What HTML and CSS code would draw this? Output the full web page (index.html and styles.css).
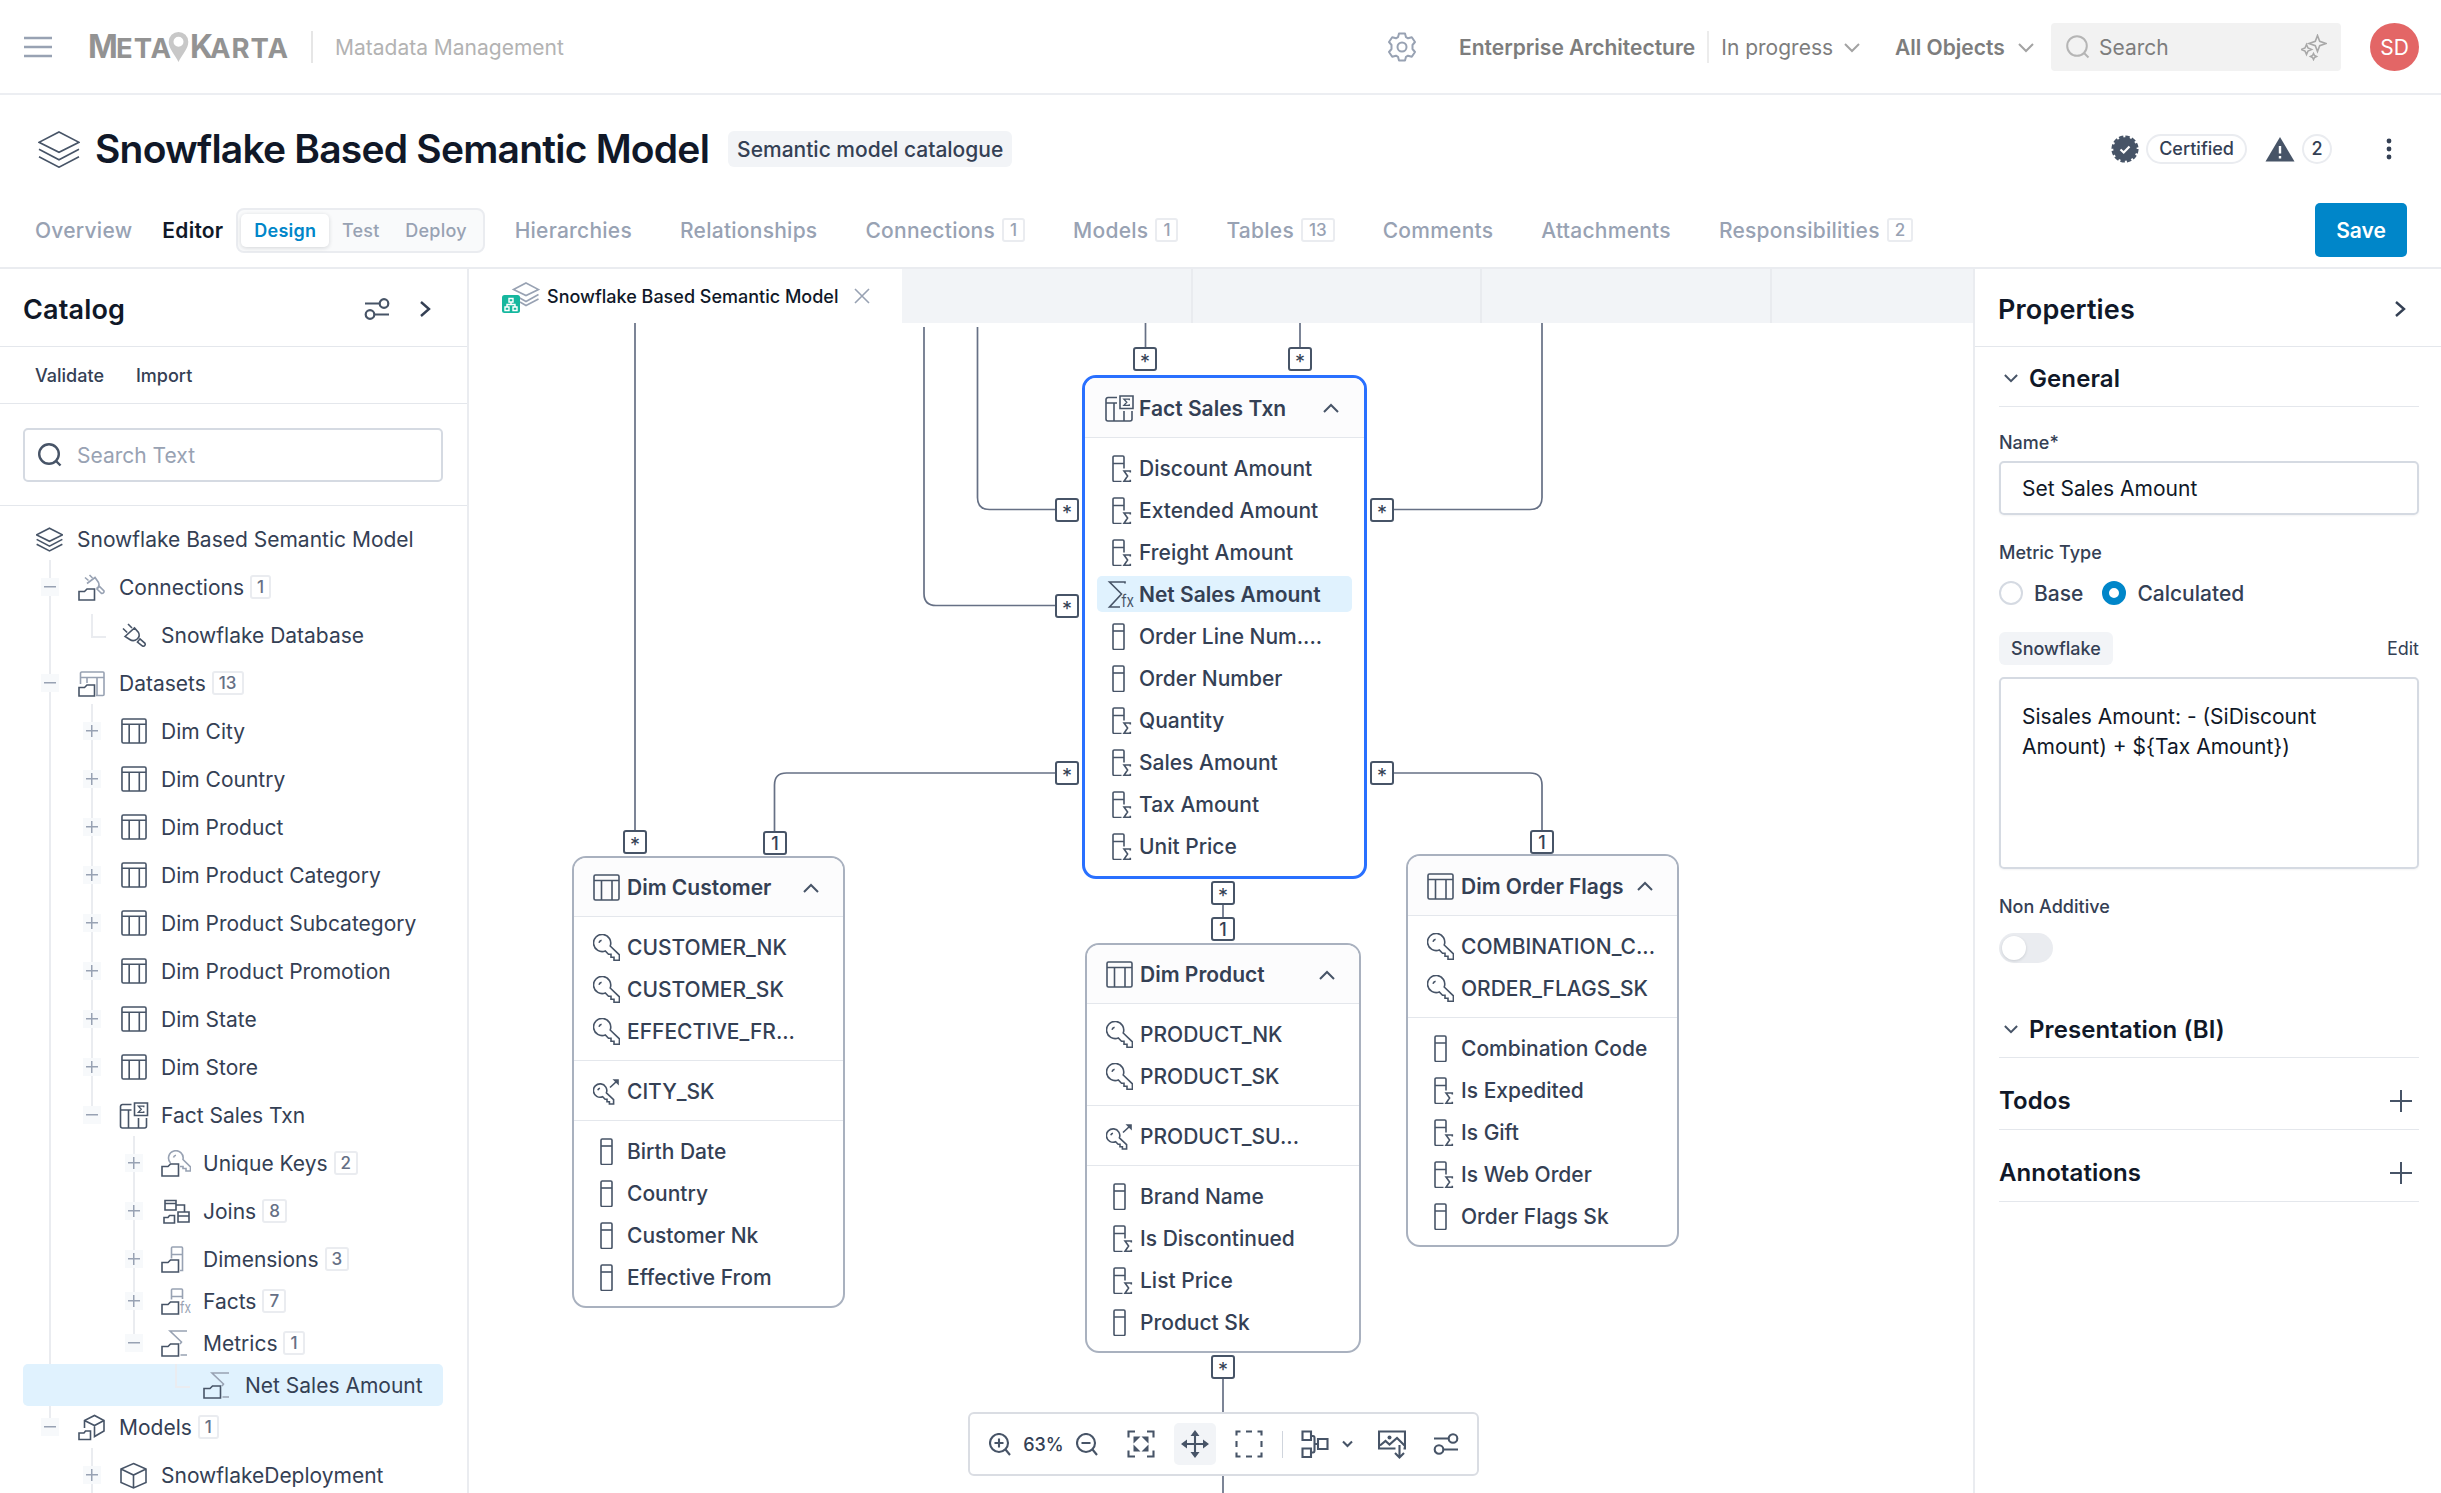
FILE: index.html
```html
<!DOCTYPE html>
<html lang="en">
<head>
    <meta charset="UTF-8">
    <meta name="viewport" content="width=device-width, initial-scale=1.0">
    <title>MetaKarta - Snowflake Based Semantic Model</title>
    <link rel="stylesheet" href="styles.css">
</head>
<body>
    <!-- Icon sprite -->
    <svg class="sprite">
        <symbol id="layers" viewBox="0 0 42 37"><path d="M21 1L41 11.3 21 21.3 1 11.3ZM1 18.3L21 28.8 41 18.3M1 25.8L21 36.2 41 25.8"/></symbol>
        <symbol id="table" viewBox="0 0 27 27"><rect x="1" y="1" width="25" height="25" rx="1.5"/><path d="M1 6.5H26M8.5 6.5V26M19 6.5V26"/></symbol>
        <symbol id="fact-table" viewBox="0 0 29 27"><path d="M12 2.5H3a2 2 0 0 0-2 2V24a2 2 0 0 0 2 2H25a2 2 0 0 0 2-2V16M1 8H12M9 8V26M19 16V26"/><rect x="15" y="1" width="13" height="12.5"/><path class="fine" d="M24.3 5.200V4.200H18.900L21.800 7.200 18.900 10.300H24.300V9.300"/></symbol>
        <symbol id="key" viewBox="0 0 27 27"><path d="M17.2 12L26.4 20.8V26.3H21V23.3H18V20.3H15.5L12.3 17A8.6 8.6 0 1 1 17.2 12ZM6 8.7A3.6 3.6 0 0 1 8.6 6.2"/></symbol>
        <symbol id="foreign-key" viewBox="0 0 27 27"><path d="M13.4 14.9L20.6 21.7V26H16.4V23.7H14V21.3H12.1L9.6 18.8A6.7 6.7 0 1 1 13.4 14.9ZM4.8 12.3A3 3 0 0 1 7 10.3M17 9.5L24 3"/><path class="solid" d="M19.5 1.2H25.8V7.5Z"/></symbol>
        <symbol id="column" viewBox="0 0 27 27"><rect x="8" y="1" width="11" height="25.5" rx="1.2"/><path d="M8 8H19"/></symbol>
        <symbol id="column-sum" viewBox="0 0 27 27"><path d="M19 13.5V2.2A1.2 1.2 0 0 0 17.8 1H9.2A1.2 1.2 0 0 0 8 2.2V25.3A1.2 1.2 0 0 0 9.2 26.5H16.5M8 8.5H19M25.3 17.5V16H19L22.6 21 19 26.2H25.3V24.7"/></symbol>
        <symbol id="sum-fx" viewBox="0 0 30 27"><path d="M20 2.5V1H4.5L16.5 13 4.5 26H15"/><text x="16.5" y="25.500" font-size="17" textLength="12.500" lengthAdjust="spacingAndGlyphs">fx</text></symbol>
        <symbol id="plug" viewBox="0 0 27 27"><path d="M5 14.5L14.5 6 18.5 10.5C19.8 13 19 15.5 17.2 17 15 18.8 12 19 9.8 17.5ZM7.2 10.5L3 6.5M12 6L8 2M17.5 20L20 16.8 25 21.3C25.8 22.8 24.5 24.8 22.5 24Z"/></symbol>
        <symbol id="plug-folder" viewBox="0 0 27 27"><g class="soft"><path d="M9 9.5L17 3.5 20.5 8.5C21.5 11 20.5 13.5 18.5 14.5M10.5 6.5L7 3.5M14.5 4L11.5 1M19 15L21.5 12.5 26 17C26.3 18.8 24.5 20 23 19Z"/></g><path d="M1 26V17.5H6.5L9 15H16.5V26Z"/></symbol>
        <symbol id="table-folder" viewBox="0 0 27 27"><g class="soft"><path d="M2.5 14V3A1.2 1.2 0 0 1 3.7 2H25A1 1 0 0 1 26 3V24.5A1 1 0 0 1 25 25.5H18M2.5 7.5H26M9 8V13M19 8V25.5"/></g><path d="M1 26V17.5H6.5L9 15H16.5V26Z"/></symbol>
        <symbol id="key-folder" viewBox="0 0 30 27"><g class="soft"><path d="M9.5 13A7.3 7.3 0 1 1 22 9.5L29.5 17V21H25V18.5H22V16.5H19M12.5 7.5A3 3 0 0 1 15 5.2"/></g><path d="M1 26V16.5H7L9.5 14H17.5V26Z"/></symbol>
        <symbol id="joins" viewBox="0 0 30 27"><path d="M4 2.500H15V12H4ZM4 5.500H15M15 7H23.500V13.500M17 14H28V24H17ZM17 18H28M3 25V19.500H7L8.500 17.500H13.500V25Z"/></symbol>
        <symbol id="column-folder" viewBox="0 0 30 27"><g class="soft"><path d="M10.5 12.5V2A1 1 0 0 1 11.5 1H20.5A1 1 0 0 1 21.5 2V24.5H19M10.5 8.5H21.5"/></g><path d="M1 26V16.5H7L9.5 14H17.5V26Z"/></symbol>
        <symbol id="fx-folder" viewBox="0 0 30 27"><g class="soft"><path d="M10.5 11.5V2A1 1 0 0 1 11.5 1H20.5A1 1 0 0 1 21.5 2V11M10.5 8.5H21.5"/><text x="19" y="25" font-size="16" textLength="11" lengthAdjust="spacingAndGlyphs">fx</text></g><path d="M1 26V16.5H7L9.5 14H17.5V26Z"/></symbol>
        <symbol id="sum-folder" viewBox="0 0 30 27"><g class="soft"><path d="M26 1H9L20.5 12 19 14M19.5 25H26"/></g><path d="M1 26V16.5H7L9.5 14H17.5V26Z"/></symbol>
        <symbol id="cube" viewBox="0 0 27 27"><path d="M13.5 1.5L26 7V20.5L13.5 26 1 20.5V7ZM1 7L13.5 13 26 7M13.5 13V26"/></symbol>
        <symbol id="cube-folder" viewBox="0 0 27 27"><path d="M6.5 14V6.5L16.5 1.5 26 6.5V17L16.5 22.5V11.5M6.5 6.5L16.5 11.5 26 6.5M1 25.5V19H6L7.5 17H12.5V25.5Z"/></symbol>
        <symbol id="chevron" viewBox="0 0 16 10"><path d="M1 1L8 8 15 1"/></symbol>
        <symbol id="search" viewBox="0 0 24 24"><circle cx="11" cy="11" r="9.8"/><path d="M18 18L22.5 22.5"/></symbol>
        <symbol id="sliders" viewBox="0 0 26 22"><circle cx="20" cy="5.5" r="4.3"/><circle cx="6" cy="16.5" r="4.3"/><path d="M1 5.5H15.7M10.3 16.5H25"/></symbol>
        <symbol id="plus" viewBox="0 0 22 22"><path d="M11 0V22M0 11H22"/></symbol>
    </svg>

    <header class="topbar">
        <svg class="menu" width="28" height="22"><path d="M0 2H28M0 11H28M0 20H28"/></svg>
        <svg class="logo" width="200" height="44" viewBox="0 0 200 44">
            <text x="-1" y="33" font-size="32" textLength="28">M</text>
            <text x="27" y="33" font-size="27.5" textLength="55">ETA</text>
            <text x="101" y="33" font-size="32" textLength="22">K</text>
            <text x="121" y="33" font-size="27.5" textLength="78">ARTA</text>
            <path d="M89.500 7A9.800 9.800 0 0 0 79.700 16.800C79.700 24 86 29.500 89.500 37 93 29.500 99.300 24 99.300 16.800A9.800 9.800 0 0 0 89.500 7ZM89.500 11.800A5 5 0 1 1 89.500 21.800 5 5 0 1 1 89.500 11.800Z"/>
        </svg>
        <span class="app-name">Matadata Management</span>
        <svg class="gear" width="30" height="30" viewBox="0 0 30 30"><path d="M12 1.500H18L19 5.200 21 6.300 24.800 5.200 28 10 25.500 13V17L28 20 24.800 24.800 21 23.700 19 24.800 18 28.500H12L11 24.800 9 23.700 5.200 24.800 2 20 4.500 17V13L2 10 5.200 5.200 9 6.300 11 5.200Z"/><circle cx="15" cy="15" r="4.500"/></svg>
        <span class="context">Enterprise Architecture</span>
        <span class="status">In progress <svg class="caret"><use href="#chevron"/></svg></span>
        <span class="scope">All Objects <svg class="caret"><use href="#chevron"/></svg></span>
        <div class="global-search">
            <svg class="lens"><use href="#search"/></svg>
            <span>Search</span>
            <svg class="sparkle" width="26" height="27" viewBox="0 0 26 27"><path d="M16.500 1.500L18.700 7.300 25 9.500 18.700 11.700 16.500 17.500 14.300 11.700 8 9.500 14.300 7.300ZM5.500 10.500L7 14 10.500 15.500 7 17 5.500 20.500 4 17 .5 15.500 4 14ZM12.500 19.500L13.500 21.500 15.500 22.500 13.500 23.500 12.500 25.500 11.500 23.500 9.500 22.500 11.500 21.500Z"/></svg>
        </div>
        <div class="avatar">SD</div>
    </header>

    <section class="heading">
        <div class="title-row">
            <svg class="title-icon"><use href="#layers"/></svg>
            <h1>Snowflake Based Semantic Model</h1>
            <span class="kind">Semantic model catalogue</span>
            <svg class="verified" width="28" height="28" viewBox="0 0 28 28"><circle cx="14" cy="14" r="11.700"/><circle class="scallop" cx="14" cy="14" r="12.300"/><path d="M9.500 14.500L12.700 17.500 18.500 11.500"/></svg>
            <span class="pill">Certified</span>
            <svg class="warning" width="30" height="26" viewBox="0 0 30 26"><path d="M15 1L29.500 25.500H.5Z"/><path class="mark" d="M15 10V17.500M15 20V22.500"/></svg>
            <span class="pill count">2</span>
            <svg class="more" width="6" height="22"><circle cx="3" cy="3" r="2.400"/><circle cx="3" cy="11" r="2.400"/><circle cx="3" cy="19" r="2.400"/></svg>
        </div>
        <nav class="tabs">
            <a>Overview</a>
            <a class="active">Editor</a>
            <div class="segmented">
                <span class="on">Design</span>
                <span>Test</span>
                <span>Deploy</span>
            </div>
            <a class="wide">Hierarchies</a>
            <a class="wide">Relationships</a>
            <a class="wide">Connections <b class="badge">1</b></a>
            <a class="wide">Models <b class="badge">1</b></a>
            <a class="wide">Tables <b class="badge">13</b></a>
            <a class="wide">Comments</a>
            <a class="wide">Attachments</a>
            <a class="wide">Responsibilities <b class="badge">2</b></a>
            <button class="save">Save</button>
        </nav>
    </section>

    <main class="workspace">
        <aside class="catalog">
            <div class="panel-head">
                <h2>Catalog</h2>
                <svg class="sliders"><use href="#sliders"/></svg>
                <svg class="collapse" width="12" height="18"><path d="M2 2L10 9 2 16"/></svg>
            </div>
            <div class="actions"><span>Validate</span><span>Import</span></div>
            <div class="filter">
                <div class="filter-box"><svg class="lens"><use href="#search"/></svg>Search Text</div>
            </div>
            <div class="tree">
                <div class="row"><svg class="ico"><use href="#layers"/></svg>Snowflake Based Semantic Model</div>
                <div class="row"><i class="t minus"></i><svg class="ico"><use href="#plug-folder"/></svg>Connections <b class="badge">1</b></div>
                <div class="row"><i class="g"></i><i class="elbow"></i><svg class="ico"><use href="#plug"/></svg>Snowflake Database</div>
                <div class="row"><i class="t minus"></i><svg class="ico"><use href="#table-folder"/></svg>Datasets <b class="badge">13</b></div>
                <div class="row"><i class="g"></i><i class="t"></i><svg class="ico small"><use href="#table"/></svg>Dim City</div>
                <div class="row"><i class="g"></i><i class="t"></i><svg class="ico small"><use href="#table"/></svg>Dim Country</div>
                <div class="row"><i class="g"></i><i class="t"></i><svg class="ico small"><use href="#table"/></svg>Dim Product</div>
                <div class="row"><i class="g"></i><i class="t"></i><svg class="ico small"><use href="#table"/></svg>Dim Product Category</div>
                <div class="row"><i class="g"></i><i class="t"></i><svg class="ico small"><use href="#table"/></svg>Dim Product Subcategory</div>
                <div class="row"><i class="g"></i><i class="t"></i><svg class="ico small"><use href="#table"/></svg>Dim Product Promotion</div>
                <div class="row"><i class="g"></i><i class="t"></i><svg class="ico small"><use href="#table"/></svg>Dim State</div>
                <div class="row"><i class="g"></i><i class="t"></i><svg class="ico small"><use href="#table"/></svg>Dim Store</div>
                <div class="row"><i class="g"></i><i class="t minus last"></i><svg class="ico big"><use href="#fact-table"/></svg>Fact Sales Txn</div>
                <div class="row"><i class="g"></i><i></i><i class="t"></i><svg class="ico big"><use href="#key-folder"/></svg>Unique Keys <b class="badge">2</b></div>
                <div class="row"><i class="g"></i><i></i><i class="t"></i><svg class="ico big"><use href="#joins"/></svg>Joins <b class="badge">8</b></div>
                <div class="row"><i class="g"></i><i></i><i class="t"></i><svg class="ico big"><use href="#column-folder"/></svg>Dimensions <b class="badge">3</b></div>
                <div class="row tight"><i class="g"></i><i></i><i class="t"></i><svg class="ico big"><use href="#fx-folder"/></svg>Facts <b class="badge">7</b></div>
                <div class="row tight"><i class="g"></i><i></i><i class="t minus last"></i><svg class="ico big"><use href="#sum-folder"/></svg>Metrics <b class="badge">1</b></div>
                <div class="row tight selected"><i></i><i></i><i></i><i class="elbow"></i><svg class="ico big"><use href="#sum-folder"/></svg>Net Sales Amount</div>
                <div class="row tight"><i class="t minus last"></i><svg class="ico"><use href="#cube-folder"/></svg>Models <b class="badge">1</b></div>
                <div class="row"><i></i><i class="t"></i><svg class="ico"><use href="#cube"/></svg>SnowflakeDeployment</div>
            </div>
        </aside>

        <section class="editor">
            <div class="doc-tabs">
                <div class="doc-tab open">
                    <svg class="doc-icon" width="40" height="34" viewBox="0 0 40 34">
                        <path class="stack" d="M26 2L38.500 8.500 26 14.500 13.500 8.500ZM18 16L26 20.500 38.500 13.500M20 21L26 24.500 38.500 18"/>
                        <rect class="chip" x="2" y="14" width="18" height="18" rx="2.500"/>
                        <path class="chip-lines" d="M9 17.500H13V21H9ZM5 26H9V29.500H5ZM13 26H17V29.500H13ZM11 21V23.500M7 26V23.500H15V26"/>
                    </svg>
                    Snowflake Based Semantic Model
                    <svg class="close" width="16" height="16"><path d="M1 1L15 15M15 1L1 15"/></svg>
                </div>
                <div class="doc-tab"></div>
                <div class="doc-tab"></div>
                <div class="doc-tab"></div>
                <div class="doc-tab"></div>
            </div>
            <div class="canvas">
                <svg class="links" viewBox="469 323 1504 1170">
                    <path d="M635 323V832M924 327V593.500Q924 605.500 936 605.500H1056M977.500 327V497.500Q977.500 509.500 989.500 509.500H1056M1145.500 323V348M1300 323V348M1542 323V497.500Q1542 509.500 1530 509.500H1393M774.500 832V785Q774.500 773 786.500 773H1056M1393 773H1530Q1542 773 1542 785V831M1223 903V918M1223 1378V1493"/>
                </svg>

                <span class="end many m1">*</span>
                <span class="end many m2">*</span>
                <span class="end many l1">*</span>
                <span class="end many l2">*</span>
                <span class="end many l3">*</span>
                <span class="end many r1">*</span>
                <span class="end many r2">*</span>
                <span class="end many b1">*</span>
                <span class="end b2">1</span>
                <span class="end many b3">*</span>
                <span class="end many c1">*</span>
                <span class="end c2">1</span>
                <span class="end f1">1</span>

                <div class="node fact">
                    <div class="node-head"><svg class="fico"><use href="#fact-table"/></svg>Fact Sales Txn<svg class="fold"><use href="#chevron"/></svg></div>
                    <div class="fields">
                        <div><svg class="fico"><use href="#column-sum"/></svg>Discount Amount</div>
                        <div><svg class="fico"><use href="#column-sum"/></svg>Extended Amount</div>
                        <div><svg class="fico"><use href="#column-sum"/></svg>Freight Amount</div>
                        <div class="picked"><svg class="fico"><use href="#sum-fx"/></svg>Net Sales Amount</div>
                        <div><svg class="fico"><use href="#column"/></svg>Order Line Num....</div>
                        <div><svg class="fico"><use href="#column"/></svg>Order Number</div>
                        <div><svg class="fico"><use href="#column-sum"/></svg>Quantity</div>
                        <div><svg class="fico"><use href="#column-sum"/></svg>Sales Amount</div>
                        <div><svg class="fico"><use href="#column-sum"/></svg>Tax Amount</div>
                        <div><svg class="fico"><use href="#column-sum"/></svg>Unit Price</div>
                    </div>
                </div>

                <div class="node customer">
                    <div class="node-head"><svg class="fico"><use href="#table"/></svg>Dim Customer<svg class="fold"><use href="#chevron"/></svg></div>
                    <div class="fields">
                        <div><svg class="fico"><use href="#key"/></svg>CUSTOMER_NK</div>
                        <div><svg class="fico"><use href="#key"/></svg>CUSTOMER_SK</div>
                        <div><svg class="fico"><use href="#key"/></svg>EFFECTIVE_FR...</div>
                    </div>
                    <div class="fields">
                        <div><svg class="fico"><use href="#foreign-key"/></svg>CITY_SK</div>
                    </div>
                    <div class="fields">
                        <div><svg class="fico"><use href="#column"/></svg>Birth Date</div>
                        <div><svg class="fico"><use href="#column"/></svg>Country</div>
                        <div><svg class="fico"><use href="#column"/></svg>Customer Nk</div>
                        <div><svg class="fico"><use href="#column"/></svg>Effective From</div>
                    </div>
                </div>

                <div class="node product">
                    <div class="node-head"><svg class="fico"><use href="#table"/></svg>Dim Product<svg class="fold"><use href="#chevron"/></svg></div>
                    <div class="fields">
                        <div><svg class="fico"><use href="#key"/></svg>PRODUCT_NK</div>
                        <div><svg class="fico"><use href="#key"/></svg>PRODUCT_SK</div>
                    </div>
                    <div class="fields">
                        <div><svg class="fico"><use href="#foreign-key"/></svg>PRODUCT_SU...</div>
                    </div>
                    <div class="fields">
                        <div><svg class="fico"><use href="#column"/></svg>Brand Name</div>
                        <div><svg class="fico"><use href="#column-sum"/></svg>Is Discontinued</div>
                        <div><svg class="fico"><use href="#column-sum"/></svg>List Price</div>
                        <div><svg class="fico"><use href="#column"/></svg>Product Sk</div>
                    </div>
                </div>

                <div class="node flags">
                    <div class="node-head"><svg class="fico"><use href="#table"/></svg>Dim Order Flags<svg class="fold"><use href="#chevron"/></svg></div>
                    <div class="fields">
                        <div><svg class="fico"><use href="#key"/></svg>COMBINATION_C...</div>
                        <div><svg class="fico"><use href="#key"/></svg>ORDER_FLAGS_SK</div>
                    </div>
                    <div class="fields">
                        <div><svg class="fico"><use href="#column"/></svg>Combination Code</div>
                        <div><svg class="fico"><use href="#column-sum"/></svg>Is Expedited</div>
                        <div><svg class="fico"><use href="#column-sum"/></svg>Is Gift</div>
                        <div><svg class="fico"><use href="#column-sum"/></svg>Is Web Order</div>
                        <div><svg class="fico"><use href="#column"/></svg>Order Flags Sk</div>
                    </div>
                </div>

                <div class="toolbar">
                    <div class="zoom">
                        <svg width="22" height="23" viewBox="0 0 22 23"><circle cx="10" cy="10" r="9"/><path d="M16.500 16.500L21 22M10 5.500V14.500M5.500 10H14.500"/></svg>
                        <span>63%</span>
                        <svg width="22" height="23" viewBox="0 0 22 23"><circle cx="10" cy="10" r="9"/><path d="M16.500 16.500L21 22M5.500 10H14.500"/></svg>
                    </div>
                    <div class="tool"><svg width="28" height="28" viewBox="0 0 28 28"><path d="M1.500 7.500V1.500H8M20 1.500H26.500V7.500M26.500 20.500V26.500H20M8 26.500H1.500V20.500"/><path class="solid" d="M6.500 6.500H13.500L6.500 13.500ZM14.500 6.500H21.500V13.500ZM21.500 14.500V21.500H14.500ZM13.500 21.500H6.500V14.500Z"/></svg></div>
                    <div class="tool on"><svg width="28" height="28" viewBox="0 0 28 28"><path d="M14 4V24M4 14H24"/><path class="solid" d="M14 0L18.500 6H9.500ZM14 28L9.500 22H18.500ZM0 14L6 9.500V18.500ZM28 14L22 18.500V9.500Z"/></svg></div>
                    <div class="tool"><svg width="28" height="28" viewBox="0 0 28 28"><path d="M1.500 5.500V1.500H5.500M11 1.500H17M22.500 1.500H26.500V5.500M26.500 11V17M26.500 22.500V26.500H22.500M17 26.500H11M5.500 26.500H1.500V22.500M1.500 17V11"/></svg></div>
                    <div class="rule"></div>
                    <div class="tool split">
                        <svg width="28" height="28" viewBox="0 0 28 28"><path d="M1.500 1.500H10V10H1.500ZM1.500 18.500H10V27H1.500ZM17 9H26.500V19H17ZM10 6H12Q13.500 6 13.500 8V20.500Q13.500 22.500 12 22.500H10M13.500 14H17"/></svg>
                        <svg width="11" height="8" viewBox="0 0 11 8"><path d="M1 1.500L5.500 6 10 1.500"/></svg>
                    </div>
                    <div class="tool"><svg width="28" height="29" viewBox="0 0 28 29"><path d="M17.500 18.500H1V1.500H27V18.500H25.500M2 15.500L7.500 11 11.500 14.500 19 8 26.500 15.500M21.500 15V27M17 23L21.500 27.500 26 23"/><circle class="solid" cx="11.500" cy="7.500" r="2"/></svg></div>
                    <div class="tool"><svg class="sliders"><use href="#sliders"/></svg></div>
                </div>
            </div>
        </section>

        <aside class="properties">
            <div class="panel-head">
                <h2>Properties</h2>
                <svg class="collapse" width="12" height="18"><path d="M2 2L10 9 2 16"/></svg>
            </div>
            <div class="form">
                <h3><svg class="twist"><use href="#chevron"/></svg>General</h3>
                <label>Name*</label>
                <div class="input">Set Sales Amount</div>
                <label class="spaced">Metric Type</label>
                <div class="radios">
                    <i class="radio"></i><span>Base</span>
                    <i class="radio checked"></i><span>Calculated</span>
                </div>
                <div class="source"><span class="tag">Snowflake</span><span>Edit</span></div>
                <div class="textarea">Sisales Amount: - (SiDiscount Amount) + ${Tax Amount})</div>
                <label class="spaced">Non Additive</label>
                <div class="toggle"></div>
                <h3 class="presentation"><svg class="twist"><use href="#chevron"/></svg>Presentation (BI)</h3>
                <h3 class="tall">Todos<svg class="add"><use href="#plus"/></svg></h3>
                <h3 class="tall">Annotations<svg class="add"><use href="#plus"/></svg></h3>
            </div>
        </aside>
    </main>
</body>
</html>
```
FILE: styles.css
```css
* {
    box-sizing: border-box;
    margin: 0;
    padding: 0;
}
body {
    width: 2441px;
    height: 1493px;
    overflow: hidden;
    display: flex;
    flex-direction: column;
    font-family: Inter, sans-serif;
    font-size: 21px;
    color: #344054;
    background-color: #fff;
}
svg {
    flex: none;
    fill: none;
    stroke: #475467;
    stroke-width: 1.6px;
}
symbol * {
    vector-effect: non-scaling-stroke;
}
symbol text {
    fill: #475467;
    stroke: none;
    font-weight: 400;
}
.sprite {
    display: none;
}
.solid {
    fill: #475467;
    stroke: none;
}
.fine {
    stroke-width: 1.3px;
}
.soft {
    stroke: #98a2b3;
}
.soft text {
    fill: #98a2b3;
}

/* Top bar */
.topbar {
    height: 95px;
    flex: none;
    display: flex;
    align-items: center;
    padding: 0 22px 0 24px;
    border-bottom: 2px solid #eceef2;
    color: #7d7d7d;
}
.menu {
    stroke: #98a2b3;
    stroke-width: 2.4px;
}
.logo {
    margin-left: 37px;
    overflow: visible;
}
.logo text {
    font-weight: 700;
    fill: #939393;
    stroke: none;
}
.logo path {
    fill: #c8c8c8;
    stroke: none;
}
.app-name {
    margin-left: 22px;
    padding-left: 22px;
    padding-top: 2px;
    line-height: 30px;
    border-left: 2px solid #e6e6e6;
    color: #b3b3b3;
}
.gear {
    margin-left: auto;
    stroke: #98a2b3;
    stroke-width: 2px;
    stroke-linejoin: round;
}
.context {
    margin-left: 42px;
    padding-top: 2px;
    font-weight: 600;
}
.status {
    margin-left: 12px;
    padding-left: 12px;
    padding-top: 2px;
    line-height: 30px;
    border-left: 2px solid #ececec;
}
.caret {
    width: 16px;
    height: 10px;
    margin-left: 5px;
    stroke: #a3a3a3;
    stroke-width: 2px;
    vertical-align: 2px;
}
.scope {
    margin-left: 35px;
    padding-top: 2px;
    font-weight: 600;
}
.scope .caret {
    margin-left: 8px;
}
.global-search {
    width: 290px;
    height: 48px;
    margin-left: 17px;
    padding: 1px 14px 0 15px;
    display: flex;
    align-items: center;
    border-radius: 4px;
    background-color: #f2f2f2;
}
.global-search .lens {
    width: 24px;
    height: 24px;
    margin-right: 9px;
    stroke: #b5b5b5;
    stroke-width: 2px;
}
.sparkle {
    margin-left: auto;
    stroke: #a8a8a8;
}
.avatar {
    width: 49px;
    height: 48px;
    margin-top: 1px;
    margin-left: 29px;
    line-height: 50px;
    border-radius: 50%;
    text-align: center;
    color: #fff;
    background-color: #e36666;
}

/* Title and tabs */
.heading {
    height: 174px;
    flex: none;
    padding-top: 27px;
    border-bottom: 2px solid #eaecf0;
}
.title-row {
    height: 54px;
    display: flex;
    align-items: center;
    padding: 0 49px 0 38px;
}
.title-icon {
    width: 42px;
    height: 37px;
}
h1 {
    margin-left: 15px;
    padding-bottom: 2px;
    font-size: 39px;
    font-weight: 600;
    letter-spacing: -0.02em;
    color: #101828;
}
.kind {
    height: 36px;
    margin-left: 19px;
    padding: 0 9px;
    line-height: 37px;
    border-radius: 6px;
    font-weight: 500;
    background-color: #f2f4f7;
}
.verified {
    margin-left: auto;
    fill: #475467;
}
.verified circle {
    stroke: none;
}
.verified .scallop {
    fill: none;
    stroke: #475467;
    stroke-width: 2.6px;
    stroke-dasharray: 4.4 2.04;
}
.verified path {
    fill: none;
    stroke: #fff;
    stroke-width: 2.2px;
}
.pill {
    height: 30px;
    margin-left: 7px;
    padding: 0 11px;
    line-height: 26px;
    border: 2px solid #eaecf0;
    border-radius: 15px;
    font-size: 18px;
    font-weight: 500;
}
.pill.count {
    width: 30px;
    padding: 0;
    text-align: center;
}
.warning {
    margin-left: 18px;
    fill: #475467;
    stroke: none;
}
.warning .mark {
    stroke: #fff;
    stroke-width: 2.4px;
}
.more {
    margin-left: 54px;
    fill: #344054;
    stroke: none;
}
.tabs {
    height: 54px;
    margin-top: 27px;
    padding: 0 34px 0 35px;
    display: flex;
    align-items: center;
    font-weight: 500;
    letter-spacing: 0.25px;
    color: #98a2b3;
}
.tabs a {
    margin-right: 30px;
}
.tabs a.active {
    margin-right: 13px;
    font-weight: 600;
    color: #101828;
}
.tabs a.wide {
    display: flex;
    align-items: center;
    margin-right: 48px;
}
.badge {
    height: 24px;
    margin-left: 7px;
    padding: 0 6px;
    line-height: 20px;
    border: 2px solid #eaecf0;
    border-radius: 3px;
    font-size: 17px;
    font-weight: 500;
    letter-spacing: 0;
    text-align: center;
}
.segmented {
    height: 45px;
    margin-right: 30px;
    padding: 4px 3px;
    display: flex;
    border: 2px solid #eaecf0;
    border-radius: 8px;
    font-size: 18px;
    background-color: #f9fafb;
}
.segmented span {
    padding: 0 12.8px;
    line-height: 33px;
    border-radius: 5px;
}
.segmented .on {
    font-weight: 600;
    color: #0086c9;
    background-color: #fff;
    box-shadow: 0 1px 4px rgba(16, 24, 40, 0.16);
}
.save {
    width: 92px;
    height: 54px;
    margin-left: auto;
    border: 0;
    border-radius: 5px;
    font: 600 21px Inter, sans-serif;
    color: #fff;
    background-color: #0086c9;
}

/* Panels */
.workspace {
    flex: 1;
    min-height: 0;
    display: flex;
}
.catalog {
    width: 469px;
    flex: none;
    border-right: 2px solid #eaecf0;
    overflow: hidden;
}
.panel-head {
    height: 78px;
    padding: 3px 35px 0 23px;
    display: flex;
    align-items: center;
    border-bottom: 1px solid #e4e7ec;
}
.panel-head h2 {
    margin-right: auto;
    font-size: 27px;
    font-weight: 600;
    letter-spacing: 0.15px;
    color: #101828;
}
.sliders {
    width: 26px;
    height: 22px;
    stroke-width: 2.2px;
}
.collapse {
    margin-left: 29px;
    stroke: #344054;
    stroke-width: 2.4px;
}
.catalog .collapse {
    margin-right: 1px;
}
.actions {
    height: 57px;
    padding: 0 35px;
    display: flex;
    align-items: center;
    gap: 32px;
    border-bottom: 1px solid #e4e7ec;
    font-size: 18px;
    font-weight: 500;
}
.filter {
    padding: 24px 24px 23px 23px;
    border-bottom: 1px solid #e4e7ec;
}
.filter-box {
    width: 420px;
    height: 54px;
    padding-left: 13px;
    display: flex;
    align-items: center;
    border: 2px solid #d5dae2;
    border-radius: 5px;
    color: #98a2b3;
}
.filter-box .lens {
    width: 24px;
    height: 24px;
    margin-right: 15px;
    stroke-width: 2.4px;
}

/* Tree */
.tree {
    padding: 6px 24px 0 23px;
}
.row {
    width: 420px;
    height: 48px;
    padding: 6px 0 0 6px;
    display: flex;
    align-items: center;
    white-space: nowrap;
}
.row.tight {
    height: 42px;
    padding-top: 0;
}
.row.selected {
    border-radius: 5px;
    background-color: #e0f2fe;
}
.row i {
    width: 42px;
    height: 48px;
    margin-top: -6px;
    flex: none;
    background: no-repeat 20px 0 / 2px 100%;
}
.row.tight i {
    height: 42px;
    margin-top: 0;
}
.row .g,
.row .t {
    background-image: linear-gradient(#eaecf0, #eaecf0);
}
.row .last {
    background-size: 2px 50%;
}
.row .t {
    display: flex;
    align-items: center;
    justify-content: center;
    padding-top: 6px;
}
.row.tight .t {
    padding-top: 0;
}
.row .t::before {
    content: "";
    width: 18px;
    height: 18px;
    background:
        linear-gradient(#98a2b3, #98a2b3) center / 12px 1.5px no-repeat,
        linear-gradient(#98a2b3, #98a2b3) center / 1.5px 12px no-repeat,
        #f7f9fb;
}
.row .minus::before {
    background:
        linear-gradient(#98a2b3, #98a2b3) center / 12px 1.5px no-repeat,
        #f7f9fb;
}
.row .elbow {
    height: 24px;
    margin: -18px 0 0;
    background:
        linear-gradient(#eaecf0, #eaecf0) 20px 0 / 2px 100% no-repeat,
        linear-gradient(#eaecf0, #eaecf0) 20px 100% / 15px 2px no-repeat;
}
.row.tight .elbow {
    height: 24px;
    margin-top: -18px;
}
.ico {
    width: 27px;
    height: 27px;
    margin: 0 14px 0 7px;
}
.ico.small {
    width: 26px;
    height: 26px;
    margin: 0 14px 0 8px;
}
.ico.big {
    width: 30px;
    margin: 0 12px 0 6px;
}
.row .badge {
    margin-left: 6px;
    padding: 0 5px;
    color: #667085;
}

/* Document tabs */
.editor {
    flex: 1;
    min-width: 0;
    display: flex;
    flex-direction: column;
}
.doc-tabs {
    height: 54px;
    flex: none;
    display: flex;
    background-color: #f2f4f7;
}
.doc-tab {
    width: 289.5px;
    flex: none;
    border-right: 2px solid #e9ebef;
}
.doc-tab:last-child {
    flex: 1;
    border: 0;
}
.doc-tab.open {
    width: 433px;
    margin-right: 1px;
    padding-left: 31px;
    display: flex;
    align-items: center;
    border: 0;
    font-size: 18px;
    font-weight: 500;
    color: #101828;
    background-color: #fff;
}
.doc-icon {
    margin-right: 7px;
    margin-top: 3px;
}
.doc-icon .stack {
    stroke: #98a2b3;
}
.doc-icon .chip {
    fill: #15b79e;
    stroke: none;
}
.doc-icon .chip-lines {
    stroke: #fff;
    stroke-width: 1.4px;
}
.close {
    margin-left: 16px;
    stroke: #98a2b3;
}

/* Diagram */
.canvas {
    position: relative;
    flex: 1;
}
.links {
    position: absolute;
    left: 0;
    top: 0;
    width: 1504px;
    height: 1170px;
    stroke: #667085;
    stroke-width: 1.7px;
}
.end {
    position: absolute;
    width: 24px;
    height: 24px;
    line-height: 21px;
    border: 2px solid #475467;
    border-radius: 3px;
    font-size: 18px;
    font-weight: 500;
    text-align: center;
    background-color: #fff;
}
.end.many {
    font-size: 20px;
    font-weight: 400;
    line-height: 27px;
}
.m1 { left: 664px; top: 24px; }
.m2 { left: 819px; top: 24px; }
.l1 { left: 586px; top: 175px; }
.l2 { left: 586px; top: 271px; }
.l3 { left: 586px; top: 438px; }
.r1 { left: 901px; top: 175px; }
.r2 { left: 901px; top: 438px; }
.b1 { left: 742px; top: 558px; }
.b2 { left: 742px; top: 594px; }
.b3 { left: 742px; top: 1032px; }
.c1 { left: 154px; top: 507px; }
.c2 { left: 294px; top: 508px; }
.f1 { left: 1061px; top: 507px; }
.node {
    position: absolute;
    border: 2px solid #a9b1bf;
    border-radius: 14px;
    background-color: #fff;
    overflow: hidden;
}
.fact {
    left: 613px;
    top: 52px;
    width: 285px;
    border: 3px solid #2970ff;
}
.customer { left: 103px; top: 533px; width: 273px; }
.product { left: 616px; top: 620px; width: 276px; }
.flags { left: 937px; top: 531px; width: 273px; }
.node-head {
    height: 58px;
    padding: 1px 24px 0 19px;
    display: flex;
    align-items: center;
    font-weight: 600;
    background-color: #fcfcfd;
}
.fact .node-head,
.flags .node-head {
    height: 59px;
}
.fact .node-head {
    padding-left: 20px;
    padding-right: 25px;
}
.fico {
    width: 27px;
    height: 27px;
    margin-right: 7px;
}
.fact .node-head .fico {
    width: 29px;
    margin-right: 5px;
}
.fold {
    width: 16px;
    height: 10px;
    margin-left: auto;
    transform: rotate(180deg);
    stroke-width: 2px;
}
.fields {
    padding: 12px 12px 11px;
    display: flex;
    flex-direction: column;
    gap: 6px;
    border-top: 1px solid #e4e7ec;
    font-weight: 500;
}
.fields div {
    height: 36px;
    padding-left: 7px;
    display: flex;
    align-items: center;
    white-space: nowrap;
}
.fact .fields {
    padding-bottom: 12px;
}
.fact .fields div {
    padding-left: 8px;
}
.fields .picked {
    border-radius: 5px;
    font-weight: 600;
    background-color: #e0f2fe;
}
.picked .fico {
    width: 30px;
    margin-right: 4px;
}
.toolbar {
    position: absolute;
    left: 499px;
    top: 1089px;
    width: 511px;
    height: 64px;
    padding: 0 10px 0 9px;
    display: flex;
    align-items: center;
    gap: 12px;
    border: 2px solid #dadde3;
    border-radius: 6px;
    background-color: #fff;
}
.toolbar svg {
    stroke-width: 2.1px;
}
.zoom {
    display: flex;
    align-items: center;
    padding: 0 10px;
}
.zoom span {
    width: 65px;
    text-align: center;
    font-size: 18px;
    font-weight: 500;
}
.tool {
    width: 42px;
    height: 42px;
    display: flex;
    align-items: center;
    justify-content: center;
    border-radius: 5px;
}
.tool.on {
    background-color: #f2f4f7;
}
.tool.split {
    width: 65px;
    margin-left: -1px;
    gap: 13px;
}
.rule {
    width: 1px;
    height: 27px;
    background-color: #d0d5dd;
}

/* Properties */
.properties {
    width: 468px;
    flex: none;
    border-left: 2px solid #eaecf0;
}
.form {
    padding: 0 22px 0 24px;
}
h3 {
    height: 60px;
    padding-top: 3px;
    display: flex;
    align-items: center;
    border-bottom: 1px solid #e4e7ec;
    font-size: 24px;
    font-weight: 600;
    letter-spacing: 0.1px;
    color: #101828;
}
h3.presentation {
    margin-top: 35px;
}
h3.tall {
    height: 72px;
    padding-top: 14px;
}
.twist {
    width: 14px;
    height: 9px;
    margin: 0 11px 0 5px;
    stroke-width: 2px;
}
.add {
    width: 22px;
    height: 22px;
    margin-left: auto;
    margin-right: 7px;
    stroke-width: 2px;
}
label {
    display: block;
    margin-top: 24px;
    line-height: 24px;
    font-size: 18px;
    font-weight: 500;
}
label.spaced {
    margin-top: 26px;
}
.input,
.textarea {
    border: 2px solid #d5dae2;
    border-radius: 5px;
    color: #101828;
    box-shadow: 0 1px 2px rgba(16, 24, 40, 0.05);
}
.input {
    height: 54px;
    margin-top: 6px;
    padding-left: 21px;
    line-height: 51px;
}
.radios {
    height: 24px;
    margin-top: 16px;
    display: flex;
    align-items: center;
    font-weight: 500;
}
.radio {
    width: 24px;
    height: 24px;
    margin-right: 11px;
    border: 2px solid #d5dae2;
    border-radius: 50%;
}
.radio.checked {
    margin-left: 19px;
    border: 7px solid #0086c9;
}
.source {
    height: 33px;
    margin-top: 27px;
    display: flex;
    align-items: center;
    justify-content: space-between;
    font-size: 18px;
    font-weight: 500;
}
.source span:last-child {
    font-weight: 400;
}
.source .tag {
    padding: 0 12px;
    line-height: 33px;
    border-radius: 6px;
    background-color: #f2f4f7;
}
.textarea {
    height: 192px;
    margin-top: 12px;
    padding: 23px 60px 0 21px;
    line-height: 30px;
}
.toggle {
    width: 54px;
    height: 30px;
    margin-top: 14px;
    padding: 3px;
    border-radius: 15px;
    background-color: #eaecf0;
}
.toggle::before {
    content: "";
    display: block;
    width: 24px;
    height: 24px;
    border-radius: 50%;
    background-color: #fff;
    box-shadow: 0 1px 3px rgba(16, 24, 40, 0.15);
}
```
